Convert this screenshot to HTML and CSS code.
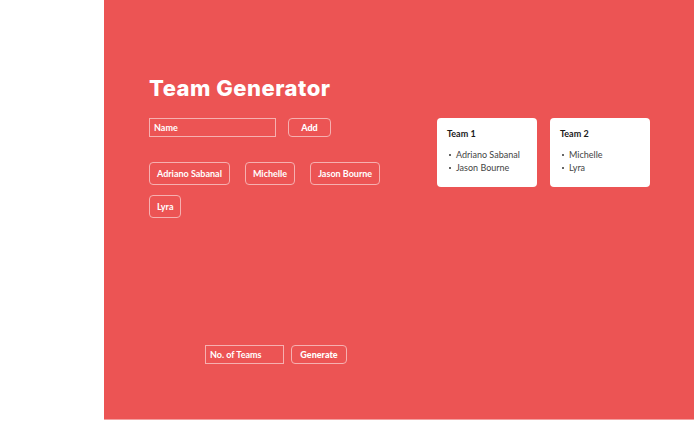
FILE: index.html
```html
<!DOCTYPE html>
<html>
<head>
<meta charset="utf-8">
<link rel="stylesheet" href="styles.css">
</head>
<body>
<div class="app">
  <div class="left">
    <h1 class="title">Team Generator</h1>
    <div class="add-row">
      <div class="field field-name">Name</div>
      <button class="btn btn-add">Add</button>
    </div>
    <div class="chips">
      <span class="chip">Adriano Sabanal</span>
      <span class="chip">Michelle</span>
      <span class="chip">Jason Bourne</span>
      <span class="chip">Lyra</span>
    </div>
    <div class="gen-row">
      <div class="field field-teams">No. of Teams</div>
      <button class="btn btn-gen">Generate</button>
    </div>
  </div>
  <div class="teams">
    <div class="card">
      <div class="card-title">Team 1</div>
      <ul class="members">
        <li>Adriano Sabanal</li>
        <li>Jason Bourne</li>
      </ul>
    </div>
    <div class="card">
      <div class="card-title">Team 2</div>
      <ul class="members">
        <li>Michelle</li>
        <li>Lyra</li>
      </ul>
    </div>
  </div>
</div>
</body>
</html>
```

FILE: styles.css
```css
* { box-sizing: border-box; }
html, body { margin: 0; padding: 0; background: #ffffff; }
body { font-family: "Lato", "Noto Sans", sans-serif; }

.app {
  margin-left: 104px;
  height: 420px;
  background: #ec5454;
  border-bottom: 1px solid #f3a0a0;
  display: flex;
  padding: 75px 0 0 45px;
}

.left {
  width: 288px;
  display: flex;
  flex-direction: column;
}

.title {
  margin: 0;
  font-family: "Inter", sans-serif;
  font-weight: 800;
  font-size: 22px;
  line-height: 26px;
  color: #ffffff;
  letter-spacing: 0.5px;
}

.add-row {
  margin-top: 17px;
  display: flex;
  gap: 12px;
}

.field {
  height: 19px;
  border: 1px solid #f6b0b0;
  color: #ffffff;
  font-size: 9px;
  font-weight: 700;
  line-height: 17px;
  padding-left: 4px;
}
.field-name { width: 127px; }
.field-teams { width: 79px; }

.btn {
  height: 19px;
  border: 1px solid #f6b0b0;
  border-radius: 4px;
  background: transparent;
  color: #ffffff;
  font-family: "Lato", sans-serif;
  font-weight: 900;
  font-size: 9px;
  padding: 0;
}
.btn-add { width: 43px; }
.btn-gen { width: 56px; }

.chips {
  margin-top: 25px;
  display: flex;
  flex-wrap: wrap;
  column-gap: 15px;
  row-gap: 10px;
  width: 240px;
}

.chip {
  height: 23px;
  border: 1px solid #f6b0b0;
  border-radius: 4px;
  color: #ffffff;
  font-size: 9px;
  font-weight: 700;
  line-height: 21px;
  padding: 0 7px;
}

.gen-row {
  margin-top: 127px;
  margin-left: 56px;
  display: flex;
  gap: 7px;
}

.teams {
  margin-top: 43px;
  display: flex;
  gap: 13px;
  align-items: flex-start;
}

.card {
  width: 100px;
  height: 69px;
  background: #ffffff;
  border-radius: 4px;
  padding: 10px 10px;
}

.card-title {
  font-size: 9px;
  font-weight: 700;
  color: #1a1a1a;
  line-height: 12px;
}

.members {
  margin: 8px 0 0;
  padding: 0;
  list-style: none;
}
.members li {
  font-size: 9px;
  color: #444444;
  line-height: 13px;
  padding-left: 9px;
  position: relative;
}
.members li::before {
  content: "";
  position: absolute;
  left: 2px;
  top: 6px;
  width: 2px;
  height: 2px;
  background: #333;
  border-radius: 50%;
}
```
